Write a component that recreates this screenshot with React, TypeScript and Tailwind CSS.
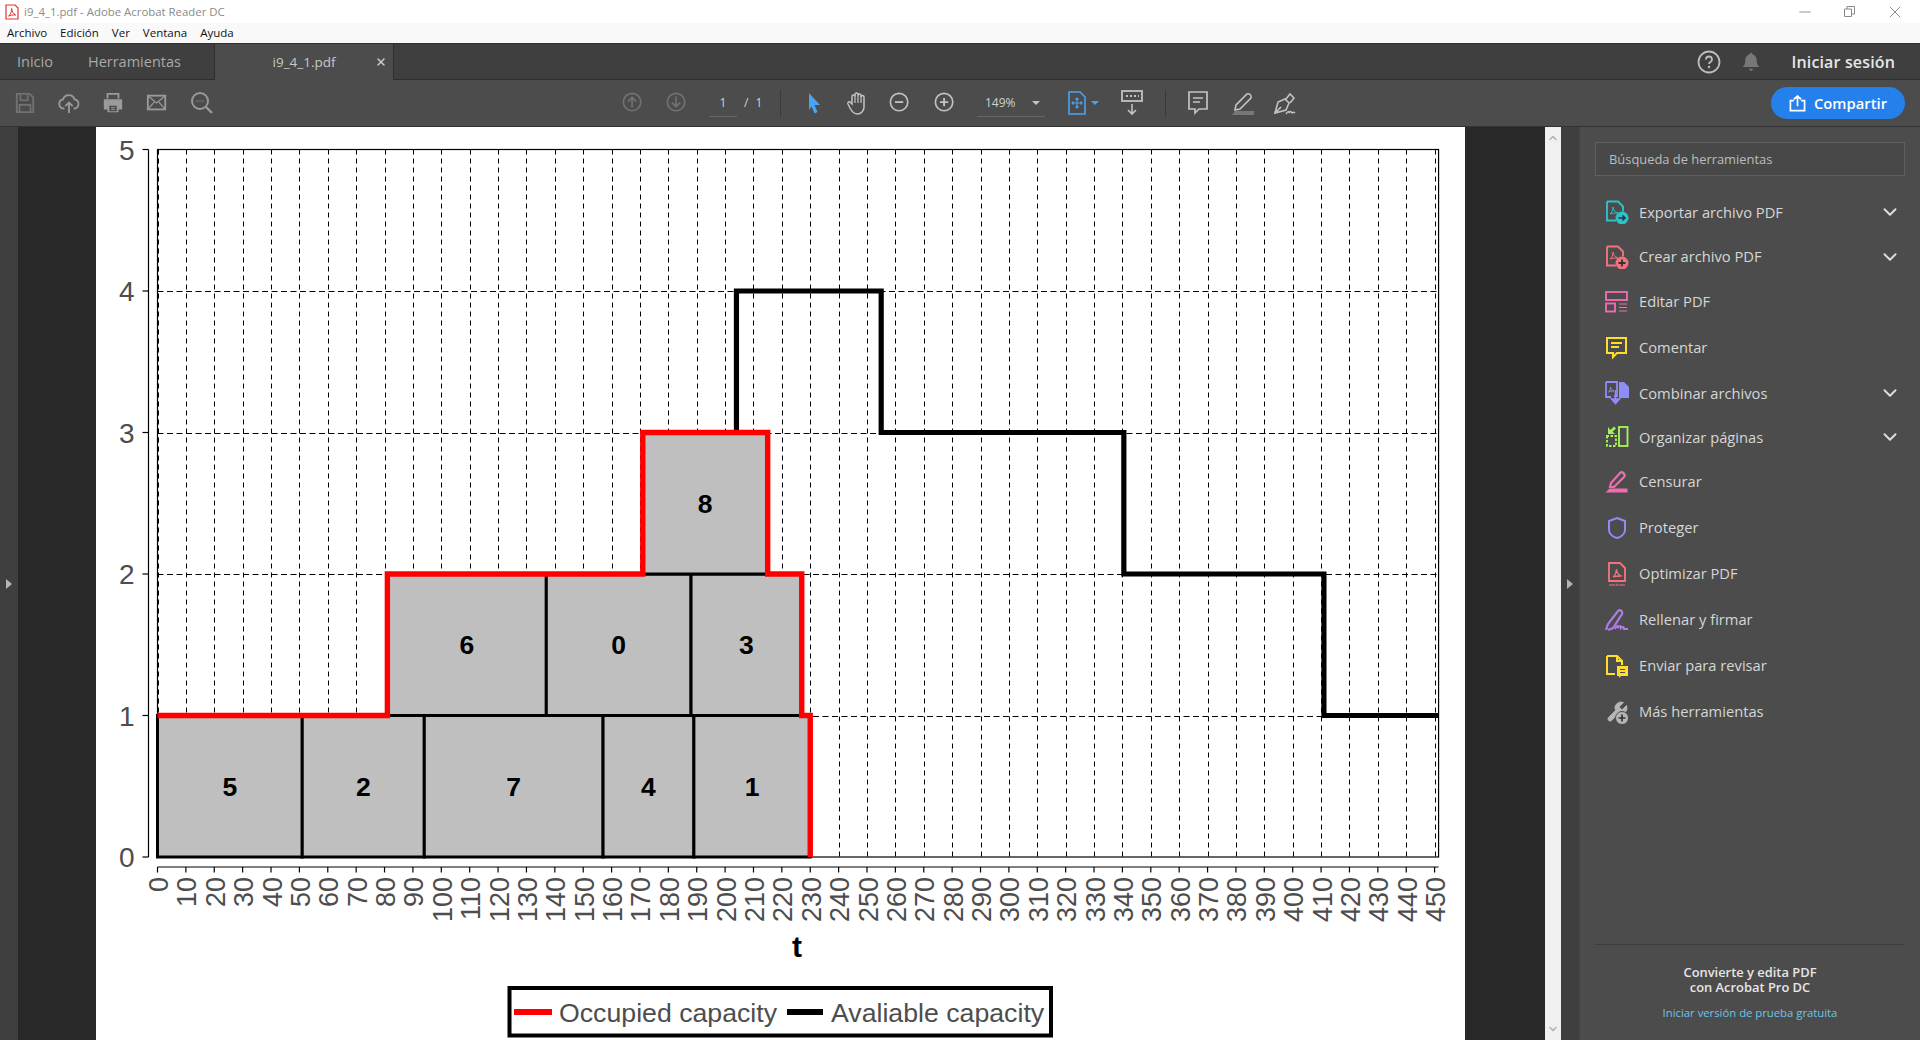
// Acrobat Reader window with a capacity chart open

import { ChevronDown, Minus, X } from 'lucide-react';
import type { ReactNode } from 'react';

const X0 = 157.5;
const PX_PER_T = 2.838;
const Y0 = 857;
const UNIT = 141.5;
const PAGE_LEFT = 96;
const PAGE_TOP = 127;

const sx = (t: number) => X0 + t * PX_PER_T - PAGE_LEFT;
const sy = (v: number) => Y0 - v * UNIT - PAGE_TOP;

const TICKS = Array.from({ length: 46 }, (_, i) => i * 10);

const BOXES = [
  { id: '5', t0: 0, t1: 51, level: 0 },
  { id: '2', t0: 51, t1: 94, level: 0 },
  { id: '7', t0: 94, t1: 157, level: 0 },
  { id: '4', t0: 157, t1: 189, level: 0 },
  { id: '1', t0: 189, t1: 230, level: 0 },
  { id: '6', t0: 81, t1: 137, level: 1 },
  { id: '0', t0: 137, t1: 188, level: 1 },
  { id: '3', t0: 188, t1: 227, level: 1 },
  { id: '8', t0: 171, t1: 215, level: 2 },
];

const OCCUPIED: [number, number][] = [
  [0, 1], [81, 1], [81, 2], [171, 2], [171, 3], [215, 3], [215, 2], [227, 2], [227, 1], [230, 1], [230, 0],
];
const AVAILABLE: [number, number][] = [
  [204, 3], [204, 4], [255, 4], [255, 3], [340.5, 3], [340.5, 2], [411, 2], [411, 1], [451.4, 1],
];

const points = (line: [number, number][]) => line.map(([t, v]) => `${sx(t)},${sy(v)}`).join(' ');

function CapacityChart() {
  const right = sx(451.4);
  return (
    <svg width="1369" height="913" className="block" fontFamily="'Liberation Sans', Arial, sans-serif">
      {/* grid */}
      {TICKS.map((t) => (
        <line key={t} x1={Math.round(sx(t)) + 0.5} x2={Math.round(sx(t)) + 0.5} y1={sy(5)} y2={sy(0)} stroke="#000" strokeWidth="1" strokeDasharray="5 4" />
      ))}
      {[1, 2, 3, 4].map((v) => (
        <line key={v} x1={sx(0)} x2={right} y1={Math.round(sy(v)) + 0.5} y2={Math.round(sy(v)) + 0.5} stroke="#000" strokeWidth="1" strokeDasharray="6 3.5" />
      ))}
      <rect x={sx(0)} y={sy(5)} width={right - sx(0)} height={sy(0) - sy(5)} fill="none" stroke="#000" strokeWidth="1.2" />

      {/* boxes */}
      {BOXES.map((b) => (
        <g key={b.id}>
          <rect
            x={sx(b.t0)}
            y={sy(b.level + 1)}
            width={sx(b.t1) - sx(b.t0)}
            height={UNIT}
            fill="#bfbfbf"
            stroke="#000"
            strokeWidth="3"
          />
          <text
            x={(sx(b.t0) + sx(b.t1)) / 2}
            y={sy(b.level + 0.5) + 9.5}
            textAnchor="middle"
            fontSize="26.5"
            fontWeight="700"
            fill="#000"
          >
            {b.id}
          </text>
        </g>
      ))}

      {/* capacity lines */}
      <polyline points={points(AVAILABLE)} fill="none" stroke="#000" strokeWidth="5.2" strokeLinejoin="miter" />
      <polyline points={points(OCCUPIED)} fill="none" stroke="#ff0000" strokeWidth="5.4" strokeLinejoin="miter" />

      {/* y axis */}
      <line x1={sx(0) - 9} x2={sx(0) - 9} y1={sy(5)} y2={sy(0)} stroke="#000" strokeWidth="1.2" />
      {[0, 1, 2, 3, 4, 5].map((v) => (
        <g key={v}>
          <line x1={sx(0) - 15} x2={sx(0) - 9} y1={sy(v)} y2={sy(v)} stroke="#000" strokeWidth="1.2" />
          <text x={sx(0) - 23} y={sy(v) + 10} textAnchor="end" fontSize="28" fill="#4d4d4d">
            {v}
          </text>
        </g>
      ))}

      {/* x axis */}
      <line x1={sx(0)} x2={right} y1={sy(0) + 10} y2={sy(0) + 10} stroke="#000" strokeWidth="1.2" />
      {TICKS.map((t) => (
        <g key={t}>
          <line x1={sx(t)} x2={sx(t)} y1={sy(0) + 10} y2={sy(0) + 15.5} stroke="#000" strokeWidth="1.2" />
          <text
            transform={`translate(${sx(t) + 10.5} ${sy(0) + 20}) rotate(-90)`}
            textAnchor="end"
            fontSize="27"
            fill="#4d4d4d"
          >
            {t}
          </text>
        </g>
      ))}
      <text x={701} y={830} textAnchor="middle" fontSize="30" fontWeight="700" fill="#000">
        t
      </text>

      {/* legend */}
      <rect x={413.5} y={861} width={541.5} height={47.5} fill="#fff" stroke="#000" strokeWidth="4" />
      <line x1={418} x2={456} y1={885} y2={885} stroke="#ff0000" strokeWidth="6" />
      <text x={463} y={895} fontSize="26.7" fill="#4d4d4d">
        Occupied capacity
      </text>
      <line x1={691} x2={727} y1={885} y2={885} stroke="#000" strokeWidth="6" />
      <text x={735} y={895} fontSize="26.7" fill="#4d4d4d">
        Avaliable capacity
      </text>
    </svg>
  );
}

function Ico({ children, w = 24, h = 24, vb = '0 0 24 24', className = '' }: { children: ReactNode; w?: number; h?: number; vb?: string; className?: string }) {
  return (
    <svg width={w} height={h} viewBox={vb} fill="none" className={`shrink-0 ${className}`}>
      {children}
    </svg>
  );
}

const PDF_GLYPH = 'M5 14c2-1 3-4 3-7 0 3 2 5 5 6-3 0-6 0-8 1z';
const WRENCH =
  'M14.7 6.3a1 1 0 0 0 0 1.400l1.600 1.600a1 1 0 0 0 1.400 0l3.770-3.770a6 6 0 0 1-7.940 7.940l-6.910 6.910a2.120 2.120 0 0 1-3-3l6.910-6.910a6 6 0 0 1 7.940-7.940l-3.760 3.760z';

const TOOLS: { label: string; chevron?: boolean; icon: ReactNode; rowH: string }[] = [
  {
    label: 'Exportar archivo PDF',
    chevron: true,
    rowH: 'h-[44px]',
    icon: (
      <Ico>
        <path d="M2 1.500h11l5 5v5M2 1.500v19h9" stroke="#2bc2c9" strokeWidth="1.900" />
        <path d={PDF_GLYPH} stroke="#2bc2c9" strokeWidth="1" />
        <circle cx="17" cy="18" r="6.500" fill="#2bc2c9" />
        <path d="M13.500 18h6M17.500 15.500l2.500 2.500-2.500 2.500" stroke="#333" strokeWidth="1.600" />
      </Ico>
    ),
  },
  {
    label: 'Crear archivo PDF',
    chevron: true,
    rowH: 'h-[45px]',
    icon: (
      <Ico>
        <path d="M2 1.500h11l5 5v5M2 1.500v19h9" stroke="#f2737b" strokeWidth="1.900" />
        <path d={PDF_GLYPH} stroke="#f2737b" strokeWidth="1" />
        <circle cx="17" cy="18" r="6.500" fill="#f2737b" />
        <path d="M13.500 18h7M17 14.500v7" stroke="#333" strokeWidth="1.800" />
      </Ico>
    ),
  },
  {
    label: 'Editar PDF',
    rowH: 'h-[45px]',
    icon: (
      <Ico>
        <rect x="1" y="2" width="21" height="8" stroke="#f06bb0" strokeWidth="1.900" />
        <rect x="1" y="13.500" width="9" height="8" stroke="#f06bb0" strokeWidth="1.900" />
        <path d="M14 14h8M14 17.500h8M14 21h8" stroke="#f06bb0" strokeWidth="1" />
      </Ico>
    ),
  },
  {
    label: 'Comentar',
    rowH: 'h-[47px]',
    icon: (
      <Ico>
        <path d="M2 2h19v15H12l-4 4v-4H2z" stroke="#ffdc2e" strokeWidth="2" />
        <path d="M6 7h11M6 11h8" stroke="#ffdc2e" strokeWidth="1.900" />
      </Ico>
    ),
  },
  {
    label: 'Combinar archivos',
    chevron: true,
    rowH: 'h-[44px]',
    icon: (
      <Ico>
        <path d="M1 1h11v14H9M1 1v15h5" stroke="#8e8cf5" strokeWidth="1.800" />
        <path d="M3.500 11c1.500-1 2-3 2-5 0 2 1.500 3.500 3.500 4-2 0-4 0-5.500 1z" stroke="#8e8cf5" strokeWidth="1" />
        <path d="M14 1h5l5 5v11H14z" fill="#8e8cf5" />
        <path d="M10.500 9v10M6.500 18h8l-4 4.500z" fill="#8e8cf5" stroke="#8e8cf5" strokeWidth="1.500" />
      </Ico>
    ),
  },
  {
    label: 'Organizar páginas',
    chevron: true,
    rowH: 'h-[44px]',
    icon: (
      <Ico>
        <rect x="14" y="2" width="8.500" height="19" stroke="#a6f05b" strokeWidth="1.900" />
        <path d="M2 11v10h9V11z" stroke="#a6f05b" strokeWidth="1.900" strokeDasharray="2.500 1.500" />
        <path d="M3 2v7h7l-2.500-2.500L11 3.500 9 1.500 5.500 5z" fill="#a6f05b" />
      </Ico>
    ),
  },
  {
    label: 'Censurar',
    rowH: 'h-[45px]',
    icon: (
      <Ico>
        <path d="M5 17l1-4L15 3c2-2 6 1 4 4L9 17z" stroke="#f06bb0" strokeWidth="2.200" />
        <path d="M0.500 22.500l4-4h18v4z" fill="#f06bb0" />
      </Ico>
    ),
  },
  {
    label: 'Proteger',
    rowH: 'h-[47px]',
    icon: (
      <Ico>
        <path d="M12 2l8 3v9c0 4-4 7-8 8-4-1-8-4-8-8V5z" stroke="#8e8cf5" strokeWidth="2" />
      </Ico>
    ),
  },
  {
    label: 'Optimizar PDF',
    rowH: 'h-[45px]',
    icon: (
      <Ico>
        <path d="M4 1h11l5 5v13H4z" stroke="#f2737b" strokeWidth="1.900" />
        <path d="M8 15c2-1 3-4 3.500-8 0 3 2 6 5 7-3 0-6 0-8.500 1z" stroke="#f2737b" strokeWidth="1.300" />
        <path d="M4 23h6M14 23h6" stroke="#f2737b" strokeWidth="1" />
        <circle cx="12" cy="23" r="1" stroke="#f2737b" strokeWidth="0.800" />
      </Ico>
    ),
  },
  {
    label: 'Rellenar y firmar',
    rowH: 'h-[47px]',
    icon: (
      <Ico>
        <path d="M1 22l2-6L13 3c2-2 5 0 4 3L8 20l-5 2" stroke="#b07ae8" strokeWidth="2.200" />
        <path d="M10 21c2-4 3-4 3-1 1-2 3-3 3 0 1-1 3-2 3 1h4" stroke="#b07ae8" strokeWidth="2" />
      </Ico>
    ),
  },
  {
    label: 'Enviar para revisar',
    rowH: 'h-[45px]',
    icon: (
      <Ico>
        <path d="M2 2h10l5 5v4M2 2v18h8" stroke="#ffdc2e" strokeWidth="2" />
        <path d="M12 2v5h5" stroke="#ffdc2e" strokeWidth="2" />
        <path d="M12 12h11v10h-7l-2 2v-2h-2z" fill="#ffdc2e" />
        <path d="M15 15.500h5M15 18.500h5" stroke="#4c4c4c" strokeWidth="1.200" />
      </Ico>
    ),
  },
  {
    label: 'Más herramientas',
    rowH: 'h-[47px]',
    icon: (
      <Ico>
        <path d={WRENCH} fill="#b5b5b5" stroke="#b5b5b5" strokeWidth="1" />
        <circle cx="17" cy="18" r="6.500" fill="#b5b5b5" stroke="#4c4c4c" strokeWidth="1" />
        <path d="M13.500 18h7M17 14.500v7" stroke="#333" strokeWidth="1.700" />
      </Ico>
    ),
  },
];

function Toolbar() {
  const grey = '#9a9a9a';
  const dim = '#727272';
  return (
    <div className="relative flex h-[47px] items-center border-b border-[#333] bg-[#4c4c4c]">
      {/* left group */}
      <div className="flex w-[622px] items-center gap-[22px] pl-[14px]">
        <Ico h={22} w={22}>
          <path d="M3 2h14l4 4v16H3z" stroke={dim} strokeWidth="2" />
          <path d="M7 3v6h8V3M6 22v-8h12v8" stroke={dim} strokeWidth="1.800" />
        </Ico>
        <Ico w={22} h={24}>
          <path d="M7 18H6a5 5 0 0 1-.5-9.900 6.500 6.500 0 0 1 12.500 0A5 5 0 0 1 18 18h-1" stroke={grey} strokeWidth="2" />
          <path d="M12 23V12M8 15.500l4-4 4 4" stroke={grey} strokeWidth="2" />
        </Ico>
        <Ico w={22} h={22}>
          <path d="M6 7V2h12v5" stroke={grey} strokeWidth="2" />
          <path d="M2 8h20v11h-4v3H6v-3H2z" fill={grey} />
          <path d="M8 15h8v6H8z" fill="#4c4c4c" />
          <path d="M10 17h4M10 19h4" stroke={grey} strokeWidth="1" />
        </Ico>
        <Ico w={22} h={22}>
          <rect x="2" y="4" width="19" height="15" stroke={grey} strokeWidth="2" />
          <path d="M2 4l9.500 8L21 4M2 19l7-8M21 19l-7-8" stroke={grey} strokeWidth="1.400" />
        </Ico>
        <Ico w={24} h={24}>
          <circle cx="10" cy="10" r="8" stroke={grey} strokeWidth="2" />
          <path d="M16 16l6 6" stroke={grey} strokeWidth="2.400" />
          <path d="M6.500 10h1M9.500 10h1M12.500 10h1" stroke={grey} strokeWidth="1.500" />
        </Ico>
      </div>

      {/* page nav */}
      <Ico w={22} h={22}>
        <circle cx="11" cy="11" r="9.500" stroke={dim} strokeWidth="1.800" />
        <path d="M11 17V6M6.500 10.500L11 6l4.500 4.500" stroke={dim} strokeWidth="1.800" />
      </Ico>
      <Ico w={22} h={22} className="ml-[22px]">
        <circle cx="11" cy="11" r="9.500" stroke={dim} strokeWidth="1.800" />
        <path d="M11 5v11M6.500 11.500L11 16l4.500-4.500" stroke={dim} strokeWidth="1.800" />
      </Ico>
      <div className="ml-[21px] flex h-[28px] w-[28px] items-center justify-center border-b border-[#666] text-[12px] text-[#d0d0d0]">1</div>
      <div className="ml-[7px] w-[36px] text-[12px] tracking-[2px] text-[#d0d0d0]">/ 1</div>
      <div className="h-[27px] w-px bg-[#3a3a3a]" />

      {/* select, hand, zoom */}
      <Ico w={18} h={24} vb="0 0 18 24" className="ml-[24px]">
        <path d="M4 2l11 12H9.500l3 7-3 1.500-3-7L4 19z" fill="#4aa3f0" />
      </Ico>
      <Ico w={24} h={26} className="ml-[22px]">
        <path d="M7 13V5.500a1.500 1.500 0 0 1 3 0V3.500a1.500 1.500 0 0 1 3 0v1a1.500 1.500 0 0 1 3 0v1.500a1.500 1.500 0 0 1 3 0V16c0 4-3 7-6.500 7S7 21 5 17l-2-4c-.8-2 1.500-3 2.500-1.500z" stroke="#c2c2c2" strokeWidth="1.500" />
        <path d="M10 5v7M13 4v8M16 5v7" stroke="#c2c2c2" strokeWidth="1.200" />
      </Ico>
      <Ico w={22} h={22} className="ml-[20px]">
        <circle cx="11" cy="11" r="9.500" stroke="#c2c2c2" strokeWidth="1.800" />
        <path d="M6.500 11h9" stroke="#c2c2c2" strokeWidth="2" />
      </Ico>
      <Ico w={22} h={22} className="ml-[23px]">
        <circle cx="11" cy="11" r="9.500" stroke="#c2c2c2" strokeWidth="1.800" />
        <path d="M6.500 11h9M11 6.500v9" stroke="#c2c2c2" strokeWidth="2" />
      </Ico>
      <div className="ml-[21px] flex h-[28px] w-[68px] items-center border-b border-[#666] pl-[8px] text-[12px] text-[#d0d0d0]">
        149%
        <span className="ml-[16px] h-0 w-0 border-x-[4px] border-t-[4px] border-x-transparent border-t-[#c2c2c2]" />
      </div>

      {/* fit page */}
      <Ico w={20} h={26} vb="0 0 20 26" className="ml-[22px]">
        <path d="M2 2h11l5 5v17H2z" stroke="#4aa3f0" strokeWidth="1.600" />
        <path d="M10 8v10M5 13h10M8.500 9.500L10 8l1.500 1.500M8.500 16.500L10 18l1.500-1.500M6.500 11.500L5 13l1.500 1.500M13.500 11.500L15 13l-1.500 1.500" stroke="#4aa3f0" strokeWidth="1.200" />
      </Ico>
      <span className="ml-[4px] h-0 w-0 border-x-[4px] border-t-[4px] border-x-transparent border-t-[#4aa3f0]" />
      <Ico w={22} h={26} vb="0 0 22 26" className="ml-[22px]">
        <rect x="1" y="1" width="20" height="10" stroke="#c2c2c2" strokeWidth="1.800" />
        <path d="M5 6h2M9 6h2M13 6h2M17 6h1" stroke="#c2c2c2" strokeWidth="2" />
        <path d="M11 14v10M7 20l4 4 4-4" stroke="#c2c2c2" strokeWidth="1.600" />
      </Ico>
      <div className="ml-[22px] h-[27px] w-px bg-[#3a3a3a]" />

      {/* comment, highlight, sign */}
      <Ico w={22} h={26} vb="0 0 22 26" className="ml-[21px]">
        <path d="M2 2h18v17h-8l-4 4v-4H2z" stroke="#c2c2c2" strokeWidth="1.700" />
        <path d="M6 8h10M6 12h7" stroke="#c2c2c2" strokeWidth="1.500" />
      </Ico>
      <Ico w={24} h={26} className="ml-[21px]">
        <path d="M5 19l1-5L17 3c2-1 5 1 4 4L10 18z" stroke="#c2c2c2" strokeWidth="1.600" />
        <path d="M2 24l3-4h19v4z" fill="#777" />
      </Ico>
      <Ico w={24} h={26} className="ml-[18px]">
        <path d="M3 22l3-11 7-3 4 4-3 7zM3 22l6-6M14 8l4-5 4 4-4 5" stroke="#c2c2c2" strokeWidth="1.600" />
        <path d="M14 23c2-3 3-3 3-1 1-2 2-2 3 0 1-1 2-1 3 0" stroke="#c2c2c2" strokeWidth="1.500" />
      </Ico>

      {/* share */}
      <button className="absolute right-[15px] top-[7px] flex h-[32px] w-[134px] items-center justify-center gap-[8px] rounded-full bg-[#2680eb] text-[14.800px] font-semibold text-white">
        <Ico w={17} h={17}>
          <path d="M7 8H2v14h20V8h-5" stroke="#fff" strokeWidth="2.400" />
          <path d="M12 16V2M7 6l5-4.500L17 6" stroke="#fff" strokeWidth="2.400" />
        </Ico>
        Compartir
      </button>
    </div>
  );
}

export default function App() {
  return (
    <div className="flex h-[1040px] w-[1920px] flex-col overflow-hidden bg-[#4c4c4c] font-['Open_Sans','Noto_Sans',sans-serif]">
      {/* window title */}
      <div className="flex h-[23px] items-center bg-white pl-[5px] text-[11.400px] text-[#8b8b8b]">
        <Ico w={14} h={16} vb="0 0 14 16">
          <path d="M1 1h9l3 3v11H1z" fill="#fff" stroke="#e2332e" strokeWidth="1.200" />
          <path d="M3.500 12c2-1 3-4 3.200-7.500.2 3 1.800 5.500 4 6.500-3 0-5.200 0-7.200 1z" stroke="#e2332e" strokeWidth="1" />
        </Ico>
        <span className="ml-[5px]">i9_4_1.pdf - Adobe Acrobat Reader DC</span>
        <div className="ml-auto flex items-center text-[#8a8a8a]">
          <Minus size={18} strokeWidth={1.200} className="mr-[30px]" />
          <Ico w={11} h={11} vb="0 0 11 11" className="mr-[30px]">
            <path d="M.5 3h7v7.500h-7zM3 3V.5h7.500V8H8" stroke="#8a8a8a" />
          </Ico>
          <X size={20} strokeWidth={1.200} className="mr-[15px]" />
        </div>
      </div>

      {/* menu */}
      <div className="flex h-[20px] items-center gap-[13px] bg-[#f9f9f9] pl-[7px] text-[11.500px] text-[#111]">
        <span>Archivo</span>
        <span>Edición</span>
        <span>Ver</span>
        <span>Ventana</span>
        <span>Ayuda</span>
      </div>

      {/* tabs */}
      <div className="flex h-[37px] items-stretch border-y border-[#2e2e2e] bg-[#3f3f3f] text-[14.500px] text-[#a9a9a9]">
        <div className="flex w-[215px] items-center border-r border-[#2e2e2e] pl-[17px]">
          <span>Inicio</span>
          <span className="ml-[35px]">Herramientas</span>
        </div>
        <div className="relative -mb-px flex w-[179px] items-center justify-center border-r border-[#2e2e2e] bg-[#4c4c4c] text-[13.500px] text-[#c8c8c8]">
          i9_4_1.pdf
          <X size={12} strokeWidth={3} className="absolute right-[6px] text-[#c8c8c8]" />
        </div>
        <div className="ml-auto flex items-center pr-[25px]">
          <Ico w={24} h={24} className="mr-[20px]">
            <circle cx="12" cy="12" r="10.500" stroke="#bdbdbd" strokeWidth="1.800" />
            <path d="M9 9.500c0-4 6-4 6 0 0 2.500-3 2.500-3 4.500" stroke="#bdbdbd" strokeWidth="1.800" />
            <circle cx="12" cy="17" r="1.200" fill="#bdbdbd" />
          </Ico>
          <Ico w={20} h={22} className="mr-[30px]">
            <path d="M12 1c1 0 2 1 2 2 4 1 5 5 5 8 0 3 1 5 3 7H2c2-2 3-4 3-7 0-3 1-7 5-8 0-1 1-2 2-2z" fill="#777" />
            <path d="M9 20h6l-3 3z" fill="#777" />
          </Ico>
          <span className="text-[16px] font-semibold tracking-[0.15px] text-[#e6e6e6]">Iniciar sesión</span>
        </div>
      </div>

      <Toolbar />

      {/* body */}
      <div className="flex min-h-0 flex-1">
        {/* left rail */}
        <div className="flex w-[18px] shrink-0 items-center justify-center bg-[#3f3f3f]">
          <span className="h-0 w-0 border-y-[5px] border-l-[6px] border-y-transparent border-l-[#b5b5b5]" />
        </div>

        {/* document */}
        <div className="flex w-[1527px] shrink-0 bg-[#282828] pl-[78px]">
          <div className="h-[913px] w-[1369px] shrink-0 overflow-hidden bg-white">
            <CapacityChart />
          </div>
        </div>

        {/* scrollbar */}
        <div className="flex w-[16px] shrink-0 flex-col items-center justify-between bg-[#f0f0f0] py-[5px] text-[#b0b0b0]">
          <ChevronDown size={12} strokeWidth={3} className="rotate-180" />
          <ChevronDown size={12} strokeWidth={3} />
        </div>

        {/* tools rail */}
        <div className="flex w-[19px] shrink-0 items-center justify-center border-r border-[#444] bg-[#3f3f3f]">
          <span className="h-0 w-0 border-y-[5px] border-l-[6px] border-y-transparent border-l-[#b5b5b5]" />
        </div>

        {/* tools */}
        <div className="flex min-w-0 flex-1 flex-col bg-[#4c4c4c] text-[14.700px] text-[#d6d6d6]">
          <div className="mx-[15px] mt-[15px] flex h-[34px] items-center border border-[#5f5f5f] bg-[#484848] pl-[13px] pt-px text-[12.900px] text-[#bcbcbc]">
            Búsqueda de herramientas
          </div>
          <div className="mt-[14px]">
            {TOOLS.map((tool) => (
              <div key={tool.label} className={`flex items-center pl-[25px] pr-[19px] ${tool.rowH}`}>
                <span className="w-[34px]">{tool.icon}</span>
                <span>{tool.label}</span>
                {tool.chevron && <ChevronDown size={22} strokeWidth={2.200} className="ml-auto text-[#dcdcdc]" />}
              </div>
            ))}
          </div>
          <div className="mx-[15px] mt-auto border-t border-[#3c3c3c] pb-[19px] pt-[20px] text-center">
            <div className="text-[12.900px] font-semibold leading-[15px] text-[#e6e6e6]">
              Convierte y edita PDF
              <br />
              con Acrobat Pro DC
            </div>
            <div className="mt-[10px] text-[11.300px] leading-[16px] text-[#6cc4e8]">Iniciar versión de prueba gratuita</div>
          </div>
        </div>
      </div>
    </div>
  );
}
